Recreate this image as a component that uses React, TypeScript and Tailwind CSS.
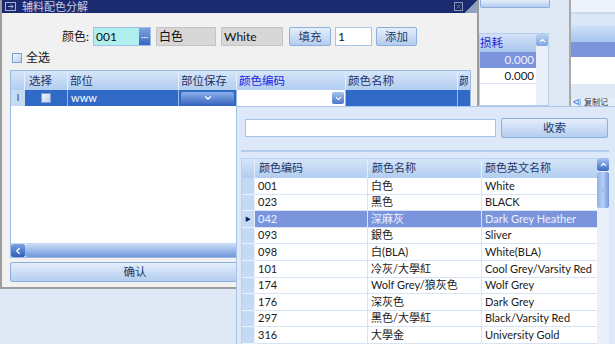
import { ChevronDown, ChevronLeft, ChevronUp, X } from 'lucide-react';

const FONT = "font-[family-name:Lato,'Noto_Sans_CJK_SC',sans-serif]";

const btn =
  'flex items-center justify-center rounded-[2px] border border-[#8eaedb] bg-gradient-to-b from-[#e4eefb] to-[#b4cdef] text-[11.5px] text-[#223a6b]';

const colors = [
  ['001', '白色', 'White'],
  ['023', '黑色', 'BLACK'],
  ['042', '深麻灰', 'Dark Grey Heather'],
  ['093', '銀色', 'Sliver'],
  ['098', '白(BLA)', 'White(BLA)'],
  ['101', '冷灰/大學紅', 'Cool Grey/Varsity Red'],
  ['174', 'Wolf Grey/狼灰色', 'Wolf Grey'],
  ['176', '深灰色', 'Dark Grey'],
  ['297', '黑色/大學紅', 'Black/Varsity Red'],
  ['316', '大學金', 'University Gold'],
  ['', '', ''],
];

function Check() {
  return (
    <span className="block size-[10px] border border-[#7f9fcf] bg-gradient-to-br from-[#f4f8fe] to-[#b9cfee]" />
  );
}

function Background() {
  return (
    <div className="absolute inset-0 flex bg-[#dfe9f6] text-[11.5px]">
      <div className="w-[479px]" />
      <div className="flex w-[90px] flex-col">
        <div className={`${btn} mx-[1px] h-[8px] w-[70px] rounded-t-none border-t-0`} />
        <div className="mt-[25px] flex h-[73px] w-[70px] border border-[#b6cdec] bg-white">
          <div className="flex flex-1 flex-col">
            <div className="flex h-[18px] items-center bg-gradient-to-b from-[#d3e3f7] to-[#a9c6ee] text-[#2a2ad8]">
              损耗
            </div>
            <div className="flex h-[16px] items-center justify-end bg-[#7b94dc] pr-[2px] text-[#eef2ff]">0.000</div>
            <div className="flex h-[16px] items-center justify-end border-b border-[#dbe6f4] pr-[2px] text-[#222]">0.000</div>
          </div>
          <div className="flex w-[12px] flex-col bg-[#e9f0fa]">
            <div className="flex h-[12px] items-center justify-center rounded-[2px] bg-gradient-to-b from-[#bcd3f2] to-[#7fa5e0] text-white">
              <ChevronUp size={9} strokeWidth={3} />
            </div>
          </div>
        </div>
      </div>
      <div className="w-[2px] bg-[#a9a9a9]" />
      <div className="flex flex-1 flex-col bg-[#e6eef9]">
        <div className="h-[12px] bg-[#eef3fb]" />
        <div className="h-[2px] bg-[#c8d8ee]" />
        <div className="h-[11px] bg-[#dde8f6]" />
        <div className="h-[17px] bg-gradient-to-b from-[#d1e2f7] to-[#a8c5ed]" />
        <div className="h-[15px] bg-[#7b94dc]" />
        <div className="h-[27px] bg-white" />
        <div className="h-[14px] bg-[#dfe9f6]" />
        <div className="flex h-[8px] items-center gap-[3px] pl-[2px] text-[8px] text-[#333]">
          <span className="text-[#3050c0]">ᐊ|</span>复制记
        </div>
      </div>
    </div>
  );
}

function Dialog() {
  return (
    <div className="absolute left-0 top-0 flex h-[289px] w-[479px] flex-col border-b-2 border-l-2 border-r-2 border-[#9d9d9d] bg-[#f1f1f1] text-[11px]">
      <div className="relative flex h-[13px] items-center bg-[#1c2a70] pl-[3px] text-[11px] leading-none text-[#c9cde0]">
        <svg width="11" height="9" viewBox="0 0 11 9" className="mr-[6px]">
          <rect x="0.5" y="0.5" width="10" height="8" fill="none" stroke="#aab2d4" />
          <path d="M3 4.5h5M6 2.5l2 2-2 2" fill="none" stroke="#aab2d4" />
        </svg>
        辅料配色分解
        <span className="ml-auto mr-[14px] flex size-[9px] items-center justify-center border border-[#8f97b8] text-[#8f97b8]">
          <X size={7} strokeWidth={2} />
        </span>
        <span className="absolute right-0 top-0 h-[13px] w-[12px] bg-[linear-gradient(to_bottom_right,transparent_50%,#8fa2c2_50%)]" />
      </div>

      <div className="flex h-[33px] items-end pl-[60px] text-[12px] text-[#111]">
        <div className="flex h-[19px] items-center gap-[4px]">
          <span>颜色:</span>
          <div className="flex h-[19px] w-[58px] border border-[#9fc0e4] bg-[#aff0ee]">
            <span className="flex-1 pl-[2px] leading-[17px]">001</span>
            <span className="flex w-[11px] items-center justify-center bg-gradient-to-b from-[#7ea3e0] to-[#3c64c0] text-[9px] leading-none text-white">
              ···
            </span>
          </div>
          <span className="ml-[1px] h-[19px] w-[60px] border border-[#c4c4c4] bg-[#d7d7d7] pl-[2px] leading-[17px]">白色</span>
          <span className="ml-[1px] h-[19px] w-[62px] border border-[#c4c4c4] bg-[#d7d7d7] pl-[2px] leading-[17px]">White</span>
          <span className={`${btn} ml-[2px] h-[19px] w-[42px]`}>填充</span>
          <span className="h-[19px] w-[37px] border border-[#a9c4e6] bg-white pl-[2px] leading-[17px]">1</span>
          <span className={`${btn} h-[19px] w-[41px]`}>添加</span>
        </div>
      </div>

      <div className="flex h-[24px] items-center gap-[4px] pl-[10px] text-[12px] text-[#111]">
        <Check />
        全选
      </div>

      <div className="ml-[8px] mr-[6px] flex h-[188px] flex-col border border-[#9cbbe2] bg-white">
        <div className="flex h-[19px] bg-gradient-to-b from-[#d6e6f9] to-[#b1cdf0] text-[11.5px] text-[#1f3466]">
          <span className="w-[14px] border-r border-[#e6f0fb]" />
          <span className="flex w-[43px] items-center border-r border-[#e6f0fb] pl-[4px]">选择</span>
          <span className="flex w-[111px] items-center border-r border-[#e6f0fb] pl-[2px]">部位</span>
          <span className="flex w-[58px] items-center border-r border-[#e6f0fb] pl-[2px]">部位保存</span>
          <span className="flex w-[109px] items-center border-r border-[#e6f0fb] pl-[2px] text-[#2323e0]">颜色编码</span>
          <span className="flex w-[112px] items-center border-r border-[#e6f0fb] pl-[2px]">颜色名称</span>
          <span className="flex w-[10px] items-center overflow-hidden pl-[1px]">颜</span>
        </div>
        <div className="flex h-[16px] bg-[#316ac6] text-white">
          <span className="flex w-[14px] items-center justify-center bg-[#c6daf2] text-[9px] text-[#333]">I</span>
          <span className="flex w-[43px] items-center justify-center border-r border-[#9bb7e6]">
            <Check />
          </span>
          <span className="flex w-[111px] items-center border-r border-[#9bb7e6] pl-[3px]">www</span>
          <span className="flex w-[58px] items-center border-r border-[#9bb7e6] px-[2px]">
            <span className="flex h-[13px] flex-1 items-center justify-center rounded-[2px] bg-gradient-to-b from-[#8cb0ea] to-[#3b66bf]">
              <ChevronDown size={10} strokeWidth={3} />
            </span>
          </span>
          <span className="flex w-[109px] items-center justify-end border-r border-[#9bb7e6] bg-white pr-[1px]">
            <span className="flex size-[12px] items-center justify-center rounded-[2px] bg-gradient-to-b from-[#a4c2ef] to-[#4d76c8]">
              <ChevronDown size={9} strokeWidth={3} />
            </span>
          </span>
          <span className="w-[112px] border-r border-[#9bb7e6]" />
          <span className="flex-1" />
        </div>
        <div className="flex-1" />
        <div className="flex h-[14px] border-t border-[#c8daf1]">
          <span className="flex w-[14px] items-center justify-center rounded-[2px] bg-gradient-to-b from-[#7ea3e2] to-[#2f5cb8] text-white">
            <ChevronLeft size={10} strokeWidth={3} />
          </span>
          <span className="flex flex-1 items-center justify-center rounded-[2px] bg-gradient-to-b from-[#c8dcf6] to-[#6f98db]">
            <span className="size-[5px] bg-[#9fb6dd]" />
          </span>
        </div>
      </div>

      <div className="ml-[8px] mt-[4px] flex">
        <span className={`${btn} h-[20px] w-[250px]`}>确认</span>
      </div>
    </div>
  );
}

function Popup() {
  return (
    <div className="absolute left-[236px] top-[106px] flex h-[238px] w-[379px] flex-col border-l border-t border-[#a9c5ea] bg-[#dde9f8] text-[11px]">
      <div className="mt-[11px] flex h-[20px] items-center pl-[8px]">
        <span className="h-[18px] w-[251px] border border-[#a6c3e8] bg-white" />
        <span className={`${btn} ml-[5px] h-[20px] w-[107px]`}>收索</span>
      </div>
      <div className="ml-[4px] mr-[6px] mt-[12px] h-[2px] bg-[#b4cdee]" />
      <div className="ml-[4px] mt-[6px] flex flex-1 overflow-hidden">
        <div className="flex w-[356px] flex-col border-l border-t border-[#b9d0ef] bg-white">
          <div className="flex h-[19px] shrink-0 bg-gradient-to-b from-[#d6e6f9] to-[#b1cdf0] text-[#1f3466]">
            <span className="w-[13px] border-r border-[#e6f0fb]" />
            <span className="flex w-[113px] items-center border-r border-[#e6f0fb] pl-[4px]">颜色编码</span>
            <span className="flex w-[114px] items-center border-r border-[#e6f0fb] pl-[4px]">颜色名称</span>
            <span className="flex flex-1 items-center pl-[3px]">颜色英文名称</span>
          </div>
          {colors.map(([code, name, en], i) => {
            const sel = i === 2;
            return (
              <div
                key={i}
                className={`flex h-[16.6px] shrink-0 ${sel ? 'bg-[#7b95dc] text-[#eef2ff]' : 'text-[#1a1a1a]'}`}
              >
                <span className="flex w-[13px] items-center justify-center border-b border-r border-[#eaf2fc] bg-[#c4d9f2] text-[6px] text-[#0e1f52]">
                  {sel ? '▶' : ''}
                </span>
                <span className="flex w-[113px] items-center border-b border-r border-[#d6e4f5] pl-[3px]">{code}</span>
                <span className="flex w-[114px] items-center border-b border-r border-[#d6e4f5] pl-[3px] whitespace-nowrap">{name}</span>
                <span className="flex flex-1 items-center border-b border-[#d6e4f5] pl-[3px] whitespace-nowrap">{en}</span>
              </div>
            );
          })}
        </div>
        <div className="flex w-[12px] flex-col bg-[#e9f0fa]">
          <span className="flex h-[13px] items-center justify-center rounded-[2px] bg-gradient-to-b from-[#a9c5f0] to-[#3f69c2] text-white">
            <ChevronUp size={9} strokeWidth={3} />
          </span>
          <span className="mt-[1px] flex h-[36px] items-center justify-center rounded-[2px] bg-gradient-to-r from-[#8fb1ea] via-[#b9d0f4] to-[#6f96dc]">
            <span className="size-[4px] bg-[#a9bfe3]" />
          </span>
        </div>
      </div>
    </div>
  );
}

export default function App() {
  return (
    <div className={`relative h-[344px] w-[615px] overflow-hidden bg-white ${FONT}`}>
      <Background />
      <Dialog />
      <Popup />
    </div>
  );
}
